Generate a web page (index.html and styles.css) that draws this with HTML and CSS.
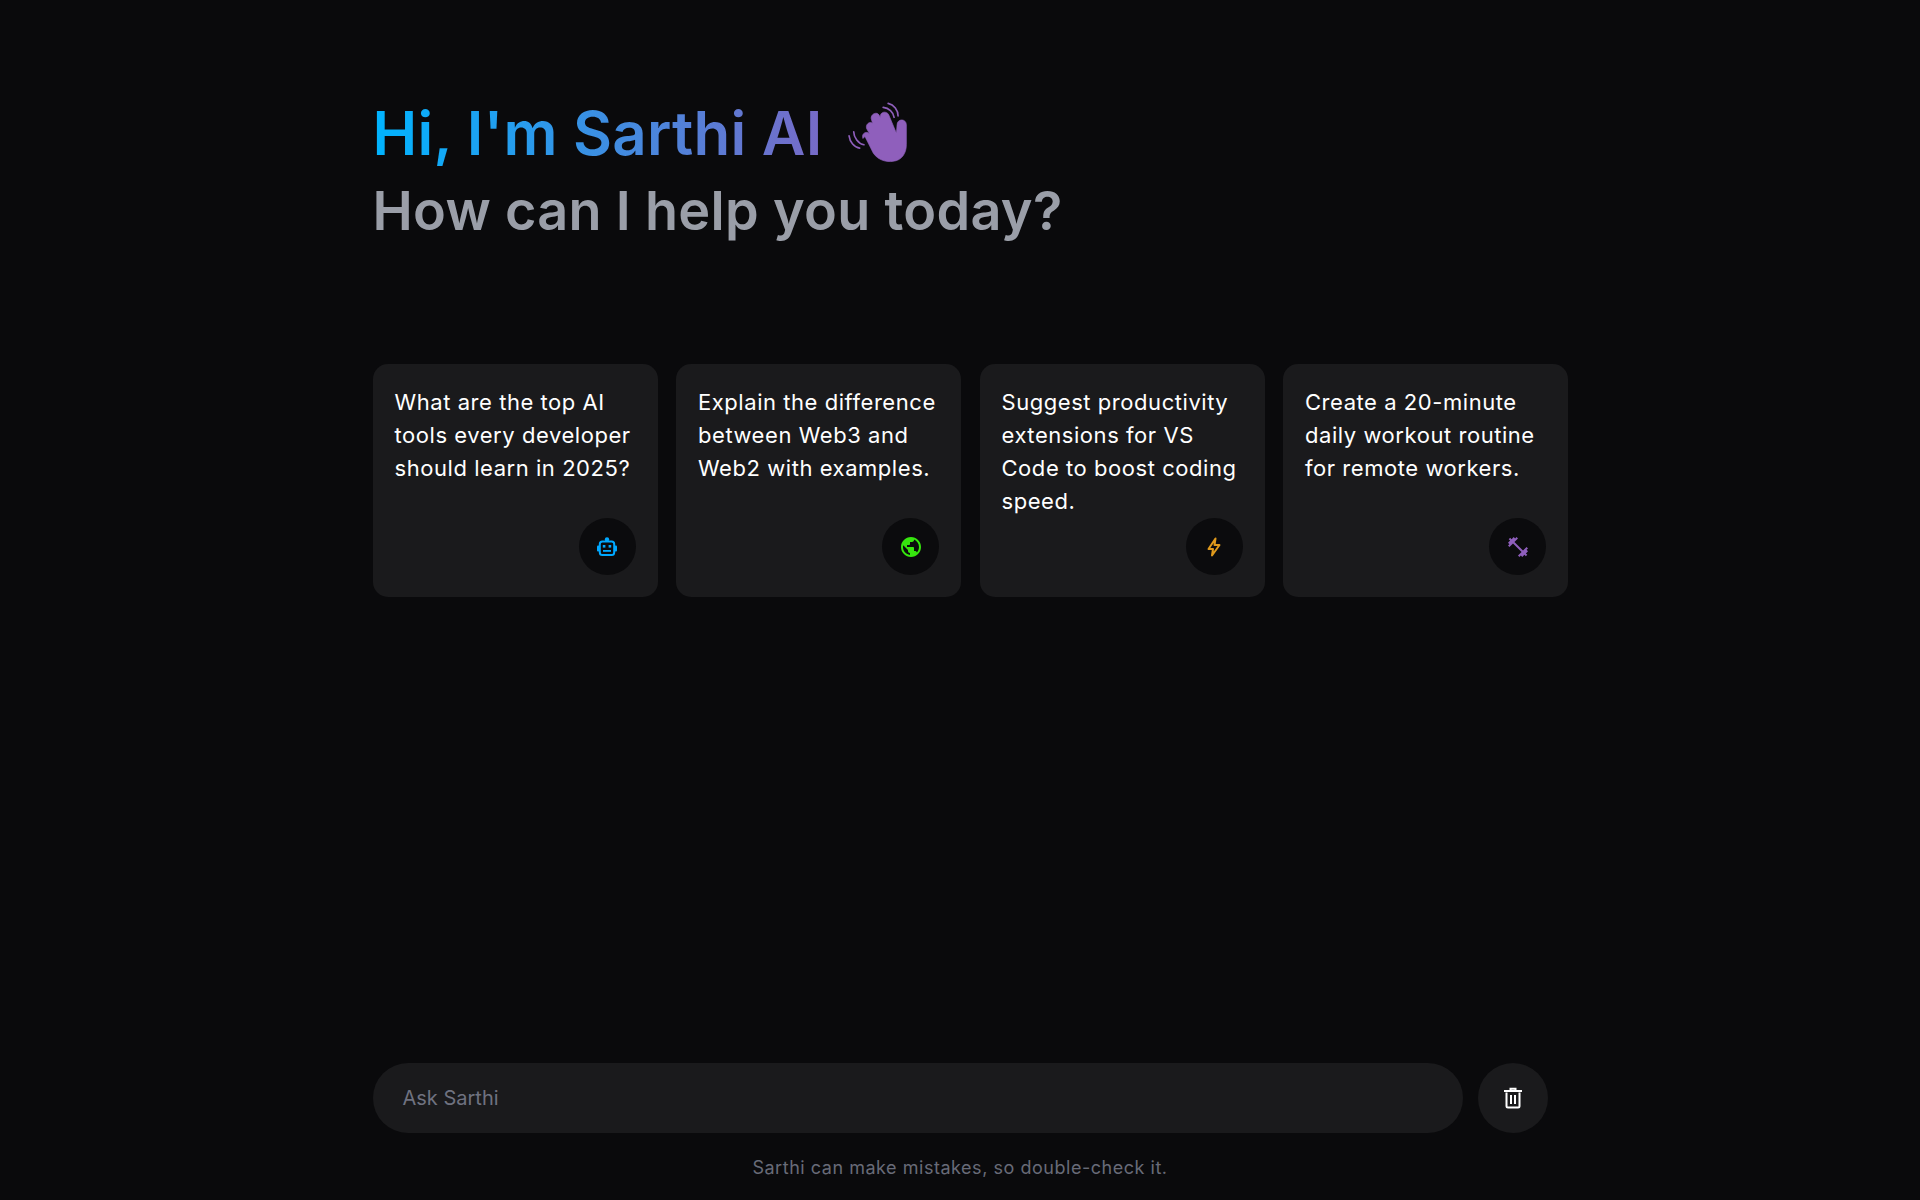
FILE: index.html
```html
<!DOCTYPE html>
<html lang="en">
<head>
<meta charset="utf-8">
<title>Sarthi AI</title>
<link rel="stylesheet" href="styles.css">
</head>
<body>
<div class="app">
  <header class="intro">
    <h1 class="greeting"><span class="gradient">Hi, I'm Sarthi AI</span>
      <svg class="wave" viewBox="85 60 145 160" aria-hidden="true">
        <g class="wave-arcs">
          <path d="M155 52 C172 54 186 66 188 82"/>
          <path d="M170 40 C188 44 200 60 200 78"/>
          <path d="M66 126 C66 142 80 162 97 165"/>
          <path d="M52 138 C54 156 68 174 84 175"/>
        </g>
        <g class="wave-hand">
          <path d="M100 140 L125 190 C140 212 165 218 185 215 C212 212 225 190 225 165 L225 105 C225 85 197 85 197 105 L195 130 L172 75 C166 60 142 66 147 83 L143 76 C136 62 113 74 120 90 L123 100 C115 92 99 104 106 118 L114 132 C105 122 88 130 94 146 Z"/>
        </g>
      </svg>
    </h1>
    <h2 class="subtitle">How can I help you today?</h2>
  </header>

  <section class="cards">
    <article class="card">
      <p class="card-text">What are the top AI tools every developer should learn in 2025?</p>
      <span class="card-icon icon-blue">
        <svg viewBox="0 0 24 24"><circle cx="12" cy="4.500" r="2.200" class="solid"/><rect x="4.800" y="6.500" width="14.400" height="13.500" rx="2.500" class="line"/><rect x="2" y="10.500" width="2.500" height="6" rx="1" class="solid"/><rect x="19.500" y="10.500" width="2.500" height="6" rx="1" class="solid"/><rect x="7.800" y="10" width="2.600" height="2.600" class="solid"/><rect x="13.600" y="10" width="2.600" height="2.600" class="solid"/><rect x="8" y="15" width="8" height="1.800" class="solid"/></svg>
      </span>
    </article>
    <article class="card">
      <p class="card-text">Explain the difference between Web3 and Web2 with examples.</p>
      <span class="card-icon icon-green">
        <svg viewBox="0 0 24 24"><path class="solid" d="M12 2C6.48 2 2 6.48 2 12s4.48 10 10 10 10-4.48 10-10S17.52 2 12 2zm-1 17.93c-3.95-.49-7-3.85-7-7.93 0-.62.08-1.21.21-1.79L9 15v1c0 1.1.9 2 2 2v1.93zm6.9-2.54c-.26-.81-1-1.39-1.9-1.39h-1v-3c0-.55-.45-1-1-1H8v-2h2c.55 0 1-.45 1-1V7h2c1.1 0 2-.9 2-2v-.41c2.93 1.19 5 4.06 5 7.41 0 2.08-.8 3.97-2.1 5.39z"/></svg>
      </span>
    </article>
    <article class="card">
      <p class="card-text">Suggest productivity extensions for VS Code to boost coding speed.</p>
      <span class="card-icon icon-amber">
        <svg viewBox="0 0 24 24"><path class="line" d="M13.500 3.500 L6.500 14 H11 L10 20.500 L17.500 10 H12.500 Z"/></svg>
      </span>
    </article>
    <article class="card">
      <p class="card-text">Create a 20-minute daily workout routine for remote workers.</p>
      <span class="card-icon icon-purple">
        <svg viewBox="0 0 24 24"><path class="solid" d="M20.57 14.86L22 13.43 20.57 12 17 15.57 8.43 7 12 3.43 10.57 2 9.14 3.43 7.71 2 5.57 4.14 4.14 2.71 2.71 4.14l1.43 1.43L2 7.71l1.43 1.43L2 10.57 3.43 12 7 8.43 15.57 17 12 20.57 13.43 22l1.43-1.43L16.29 22l2.14-2.14 1.43 1.43 1.43-1.43-1.43-1.43L22 16.29z"/></svg>
      </span>
    </article>
  </section>

  <footer class="composer">
    <div class="composer-row">
      <div class="prompt">Ask Sarthi</div>
      <button class="trash" type="button" aria-label="Delete">
        <svg viewBox="0 0 24 24"><path class="trash-line" d="M5.500 6.500 V20 a1.500 1.500 0 0 0 1.500 1.500 H17 a1.500 1.500 0 0 0 1.500 -1.500 V6.500"/><path class="trash-line" d="M3 5 H21"/><path class="trash-line" d="M9.500 4 V2.800 H14.500 V4"/><path class="trash-line" d="M10 9 V18 M14 9 V18"/></svg>
      </button>
    </div>
    <p class="disclaimer">Sarthi can make mistakes, so double-check it.</p>
  </footer>
</div>
</body>
</html>
```
FILE: styles.css
```css
* { box-sizing: border-box; }
html, body { margin: 0; height: 100%; }
body {
  background: #0a0a0c;
  color: #fff;
  font-family: Inter, "Noto Sans", "Liberation Sans", sans-serif;
}
.app {
  width: 1175px;
  height: 1200px;
  margin: 0 auto;
  display: flex;
  flex-direction: column;
}
.intro { padding-top: 94px; }
.greeting {
  display: flex;
  align-items: center;
  gap: 37px;
  margin: 0;
  height: 78px;
  font-size: 60px;
  font-weight: 600;
  line-height: 78px;
  letter-spacing: 0.22px;
}
.gradient {
  background: linear-gradient(90deg, #00b4ff 0%, #8a5fbf 115%);
  -webkit-background-clip: text;
  background-clip: text;
  color: transparent;
}
.wave { width: 48px; height: 53px; overflow: visible; margin-top: 7px; }
.wave-hand path { fill: #8f5fbc; stroke: #8f5fbc; stroke-width: 2; stroke-linejoin: round; }
.wave-arcs path { fill: none; stroke: #8f5fbc; stroke-width: 5; stroke-linecap: round; }
.subtitle {
  margin: 0;
  color: #9a9ea8;
  font-size: 54px;
  font-weight: 600;
  line-height: 78px;
  letter-spacing: 0.3px;
}
.cards {
  display: flex;
  gap: 18.500px;
  width: 1197px;
  margin-top: 114px;
}
.card {
  flex: 0 0 285px;
  height: 233px;
  padding: 22px;
  background: #1a1a1c;
  border-radius: 15px;
  display: flex;
  flex-direction: column;
  justify-content: space-between;
}
.card-text {
  margin: 0;
  font-size: 22px;
  line-height: 33px;
  font-weight: 400;
  color: #fff;
  letter-spacing: 0.55px;
}
.card-icon {
  align-self: flex-end;
  flex: 0 0 57px;
  width: 57px;
  margin-top: -12px;
  border-radius: 50%;
  background: #0b0b0d;
  display: flex;
  align-items: center;
  justify-content: center;
}
.card-icon svg { width: 24px; height: 24px; }
.icon-blue { color: #00a8ff; }
.icon-green { color: #36e60e; }
.icon-amber { color: #e09a1c; }
.icon-purple { color: #8f5fbc; }
.solid { fill: currentColor; }
.line { fill: none; stroke: currentColor; stroke-width: 2; stroke-linejoin: round; }
.composer { margin-top: auto; padding-bottom: 19px; }
.composer-row { display: flex; gap: 15px; }
.prompt {
  flex: 1;
  height: 70px;
  padding: 0 30px;
  border-radius: 35px;
  background: #1a1a1c;
  color: #6f7280;
  font-size: 20px;
  line-height: 70px;
}
.trash {
  flex: 0 0 70px;
  height: 70px;
  padding: 0;
  border: 0;
  border-radius: 50%;
  background: #1a1a1c;
  display: flex;
  align-items: center;
  justify-content: center;
}
.trash svg { width: 24px; height: 24px; }
.trash-line { fill: none; stroke: #fff; stroke-width: 2; }
.disclaimer {
  margin: 21px 0 0;
  text-align: center;
  color: #686b78;
  font-size: 18px;
  line-height: 27px;
  letter-spacing: 0.53px;
  font-weight: 400;
}
```
